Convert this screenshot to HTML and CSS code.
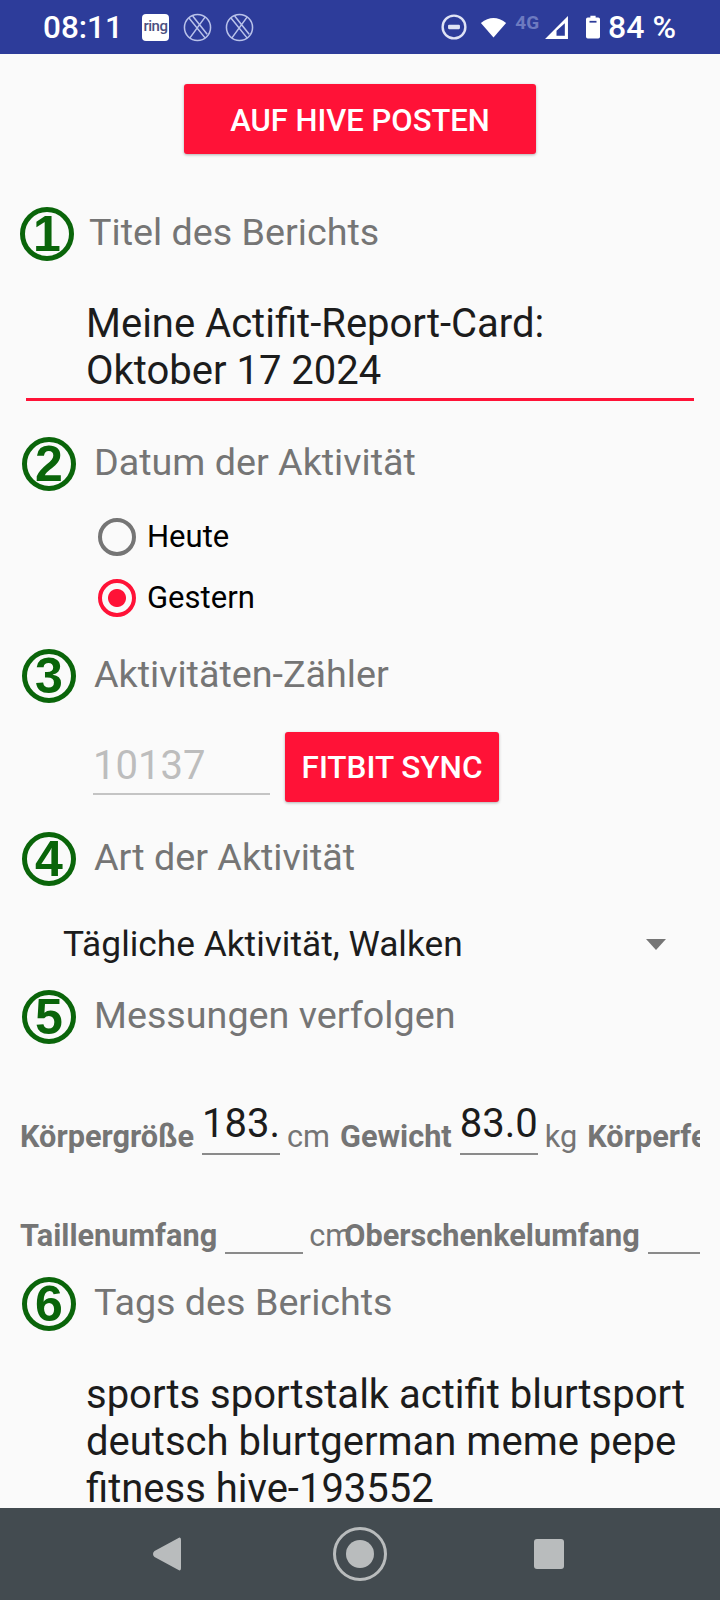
FILE: index.html
```html
<!DOCTYPE html>
<html lang="de">
<head>
    <meta charset="UTF-8">
    <meta name="viewport" content="width=device-width, initial-scale=1.0">
    <title>Actifit Report</title>
    <link rel="stylesheet" href="styles.css">
</head>
<body>
    <div class="status-bar">
        <span class="clock">08:11</span>
        <span class="ring-icon">ring</span>
        <svg class="x-icon" viewBox="0 0 30 30"><circle cx="15" cy="15" r="13.5"/><path d="M6 5l17 21M10 3l15 19M23 4L7 26"/></svg>
        <svg class="x-icon" viewBox="0 0 30 30"><circle cx="15" cy="15" r="13.5"/><path d="M6 5l17 21M10 3l15 19M23 4L7 26"/></svg>
        <span class="status-right">
            <svg class="dnd-icon" viewBox="0 0 24 24"><circle cx="12" cy="12" r="10.5"/><rect x="6.5" y="10" width="11" height="4" rx="1"/></svg>
            <svg class="wifi-icon" viewBox="0 0 30 24"><path d="M15 23L1 7Q15 -4 29 7Z"/></svg>
            <span class="net-label">4G</span>
            <svg class="signal-icon" viewBox="0 0 24 24"><path d="M23 1V23H1Z M20 8L12 15V20H20Z" fill-rule="evenodd"/></svg>
            <svg class="battery-icon" viewBox="0 0 16 26"><path d="M5 0h6v2h3q2 0 2 2v20q0 2-2 2H2q-2 0-2-2V4q0-2 2-2h3z"/><rect x="4" y="6" width="8" height="2" fill="#2d3c9a"/></svg>
            <span class="battery-text">84 %</span>
        </span>
    </div>

    <main class="form">
        <div class="post-row">
            <button class="btn btn-post">AUF HIVE POSTEN</button>
        </div>

        <div class="heading heading-first">
            <span class="num">1</span>
            <span class="heading-text">Titel des Berichts</span>
        </div>
        <div class="text-field">Meine Actifit-Report-Card:<br>Oktober 17 2024</div>

        <div class="heading heading-date">
            <span class="num">2</span>
            <span class="heading-text">Datum der Aktivität</span>
        </div>
        <div class="radio-group">
            <div class="radio-row"><span class="radio"></span>Heute</div>
            <div class="radio-row"><span class="radio radio-on"></span>Gestern</div>
        </div>

        <div class="heading heading-count">
            <span class="num">3</span>
            <span class="heading-text">Aktivitäten-Zähler</span>
        </div>
        <div class="counter-row">
            <div class="counter-input">10137</div>
            <button class="btn btn-sync">FITBIT SYNC</button>
        </div>

        <div class="heading heading-type">
            <span class="num">4</span>
            <span class="heading-text">Art der Aktivität</span>
        </div>
        <div class="spinner">
            <span>Tägliche Aktivität, Walken</span>
            <span class="spinner-arrow"></span>
        </div>

        <div class="heading heading-measure">
            <span class="num">5</span>
            <span class="heading-text">Messungen verfolgen</span>
        </div>
        <div class="measure-row measure-row-first">
            <b>Körpergröße</b><span class="measure-input">183.</span><span class="unit">cm</span>
            <b>Gewicht</b><span class="measure-input">83.0</span><span class="unit">kg</span>
            <b>Körperfett</b>
        </div>
        <div class="measure-row measure-row-second">
            <b>Taillenumfang</b><span class="measure-input"></span><span class="unit unit-tight">cm</span>
            <b>Oberschenkelumfang</b><span class="measure-input"></span>
        </div>

        <div class="heading heading-tags">
            <span class="num">6</span>
            <span class="heading-text">Tags des Berichts</span>
        </div>
        <div class="tags-text">sports sportstalk actifit blurtsport<br>deutsch blurtgerman meme pepe<br>fitness hive-193552</div>
    </main>

    <nav class="nav-bar">
        <svg class="nav-back" viewBox="0 0 30 34"><path d="M27 2Q28 1 28 3V31Q28 33 27 32L3 19Q1 17 3 15Z" stroke="#b9bcbd" stroke-width="2" stroke-linejoin="round"/></svg>
        <svg class="nav-home" viewBox="0 0 54 54"><circle cx="27" cy="27" r="25.5" fill="none" stroke="#b9bcbd" stroke-width="3"/><circle cx="27" cy="27" r="14"/></svg>
        <span class="nav-recent"></span>
    </nav>
</body>
</html>
```

FILE: styles.css
```css
* {
    margin: 0;
    padding: 0;
    box-sizing: border-box;
}

body {
    width: 720px;
    height: 1600px;
    display: flex;
    flex-direction: column;
    overflow: hidden;
    background-color: #fafafa;
    font-family: Roboto, sans-serif;
}

/* status bar */
.status-bar {
    height: 54px;
    flex-shrink: 0;
    display: flex;
    align-items: center;
    padding: 0 44px 0 43px;
    background-color: #2d3c9a;
    color: #fff;
}

.clock {
    font-size: 31.5px;
    font-weight: 500;
    margin-right: 19px;
}

.ring-icon {
    width: 27px;
    height: 27px;
    margin-right: 14px;
    border-radius: 4px;
    background-color: #fff;
    color: #4a5080;
    font-size: 15px;
    font-weight: 500;
    letter-spacing: -0.5px;
    line-height: 25px;
    text-align: center;
}

.x-icon {
    width: 29px;
    height: 29px;
    margin-right: 13px;
    fill: none;
    stroke: #b9c2ea;
    stroke-width: 1.6;
}

.status-right {
    margin-left: auto;
    display: flex;
    align-items: center;
}

.dnd-icon {
    width: 26px;
    height: 26px;
    margin-right: 13px;
    fill: #dfe3f5;
}

.dnd-icon circle {
    fill: none;
    stroke: #dfe3f5;
    stroke-width: 2.2;
}

.wifi-icon {
    width: 27px;
    height: 23px;
    fill: #fff;
    margin-right: 8px;
}

.net-label {
    align-self: flex-start;
    margin: 3px 4px 0 0;
    font-size: 19px;
    font-weight: 700;
    color: #6d7ac0;
}

.signal-icon {
    width: 27px;
    height: 25px;
    margin-right: 16px;
    fill: #fff;
}

.battery-icon {
    width: 14px;
    height: 26px;
    margin-right: 8px;
    fill: #fff;
}

.battery-text {
    font-size: 32px;
    font-weight: 500;
}

/* form */
.form {
    flex: 1;
    min-height: 0;
    overflow: hidden;
}

.post-row {
    display: flex;
    justify-content: center;
    padding-top: 30px;
}

.btn {
    border: none;
    border-radius: 3px;
    background-color: #ff1237;
    color: #fff;
    font-family: Roboto, sans-serif;
    font-size: 31px;
    font-weight: 500;
    box-shadow: 0 1px 3px rgba(0, 0, 0, 0.3);
}

.btn-post {
    width: 352px;
    height: 70px;
    padding-top: 2px;
}

.heading {
    display: flex;
    align-items: center;
    height: 54px;
    padding-left: 22px;
    color: #757575;
    font-size: 37.7px;
}

.heading-first {
    margin-top: 53px;
    padding-left: 20px;
}

.heading-date {
    margin-top: 36px;
}

.heading-count {
    margin-top: 21px;
}

.heading-type {
    margin-top: 30px;
}

.heading-measure {
    margin-top: 22px;
}

.heading-tags {
    margin-top: 23px;
}

.num {
    width: 54px;
    height: 54px;
    flex-shrink: 0;
    margin-right: 18px;
    border: 5px solid #0a650a;
    border-radius: 50%;
    color: #0a650a;
    font-family: "Liberation Sans", Arial, sans-serif;
    font-size: 50px;
    font-weight: 700;
    line-height: 44px;
    text-align: center;
}

.heading-first .num {
    margin-right: 15px;
}

.heading-text {
    position: relative;
    top: -2px;
}

.text-field {
    margin: 15px 26px 0;
    padding: 24px 0 4px 60px;
    border-bottom: 3px solid #ff1237;
    color: #1c1c1c;
    font-size: 40px;
    line-height: 47px;
}

.radio-group {
    padding: 15px 0 0 98px;
}

.radio-row {
    display: flex;
    align-items: center;
    height: 61px;
    color: #000;
    font-size: 31px;
}

.radio {
    width: 38px;
    height: 38px;
    margin-right: 11px;
    border: 4px solid #757575;
    border-radius: 50%;
}

.radio-on {
    border-color: #ff1237;
    background: radial-gradient(circle, #ff1237 0 8.5px, transparent 9.5px);
}

.counter-row {
    display: flex;
    align-items: flex-start;
    margin-top: 29px;
    padding-left: 93px;
}

.counter-input {
    width: 177px;
    height: 63px;
    margin-right: 15px;
    padding-top: 10px;
    border-bottom: 2px solid #c4c4c4;
    color: #bdbdbd;
    font-size: 40px;
}

.btn-sync {
    width: 214px;
    height: 70px;
    font-size: 31.5px;
}

.spinner {
    display: flex;
    align-items: center;
    justify-content: space-between;
    height: 48px;
    margin-top: 34px;
    padding: 0 54px 0 63px;
    color: #1c1c1c;
    font-size: 35.3px;
}

.spinner-arrow {
    width: 0;
    height: 0;
    border-left: 10px solid transparent;
    border-right: 10px solid transparent;
    border-top: 11px solid #757575;
}

.measure-row {
    display: flex;
    align-items: flex-end;
    width: 681px;
    margin-left: 19px;
    padding-left: 1px;
    overflow: hidden;
    white-space: nowrap;
    color: #757575;
    font-size: 30.7px;
}

.measure-row b {
    flex-shrink: 0;
    font-weight: 700;
    padding-bottom: 1px;
}

.measure-row-first {
    margin-top: 55px;
}

.measure-row-second {
    margin-top: 43px;
}

.measure-input {
    width: 78px;
    height: 56px;
    flex-shrink: 0;
    margin: 0 7px 0 8px;
    border-bottom: 2px solid #8a8a8a;
    color: #1c1c1c;
    font-size: 40px;
    line-height: 50px;
}

.unit {
    flex-shrink: 0;
    margin-right: 10px;
    padding-bottom: 1px;
}

.unit-tight {
    margin-left: -1px;
    margin-right: -8px;
}

.tags-text {
    margin-top: 40px;
    padding-left: 86px;
    color: #1c1c1c;
    font-size: 40px;
    line-height: 47px;
    white-space: nowrap;
}

/* bottom navigation */
.nav-bar {
    height: 92px;
    flex-shrink: 0;
    display: flex;
    align-items: center;
    background-color: #434b50;
}

.nav-back {
    width: 30px;
    height: 34px;
    margin-left: 152px;
    fill: #b9bcbd;
}

.nav-home {
    width: 54px;
    height: 54px;
    margin-left: 151px;
    fill: #b9bcbd;
}

.nav-recent {
    width: 30px;
    height: 30px;
    margin-left: 147px;
    border-radius: 3px;
    background-color: #b9bcbd;
}
```
